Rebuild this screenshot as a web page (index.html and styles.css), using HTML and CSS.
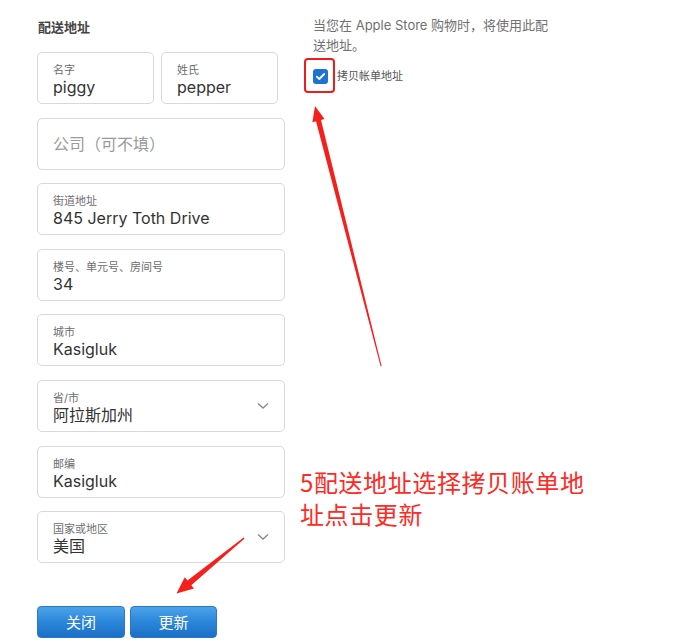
FILE: index.html
```html
<!DOCTYPE html>
<html lang="zh-CN">
<head>
<meta charset="utf-8">
<title>配送地址</title>
<link rel="stylesheet" href="styles.css">
</head>
<body>
<div class="page">
  <section class="form-col">
    <h2 class="title">配送地址</h2>
    <div class="fields">
      <div class="row-2">
        <div class="field"><span class="lbl">名字</span><span class="val">piggy</span></div>
        <div class="field"><span class="lbl">姓氏</span><span class="val">pepper</span></div>
      </div>
      <div class="field placeholder"><span class="ph">公司（可不填）</span></div>
      <div class="field"><span class="lbl">街道地址</span><span class="val">845 Jerry Toth Drive</span></div>
      <div class="field"><span class="lbl">楼号、单元号、房间号</span><span class="val">34</span></div>
      <div class="field"><span class="lbl">城市</span><span class="val">Kasigluk</span></div>
      <div class="field select"><span class="lbl">省/市</span><span class="val">阿拉斯加州</span>
        <svg class="chev" width="12" height="8" viewBox="0 0 12 8"><path d="M1 1.5 L6 6 L11 1.5" fill="none" stroke="#8a8a8a" stroke-width="1.4"/></svg>
      </div>
      <div class="field"><span class="lbl">邮编</span><span class="val">Kasigluk</span></div>
      <div class="field select"><span class="lbl">国家或地区</span><span class="val">美国</span>
        <svg class="chev" width="12" height="8" viewBox="0 0 12 8"><path d="M1 1.5 L6 6 L11 1.5" fill="none" stroke="#8a8a8a" stroke-width="1.4"/></svg>
      </div>
    </div>
    <div class="buttons">
      <button class="btn btn-close">关闭</button>
      <button class="btn btn-update">更新</button>
    </div>
  </section>
  <section class="info-col">
    <p class="info">当您在 Apple Store 购物时，将使用此配送地址。</p>
    <label class="copy">
      <span class="cb"><svg width="15" height="15" viewBox="0 0 15 15"><path d="M3.8 7.6 L6.3 10 L11.2 5" fill="none" stroke="#fff" stroke-width="1.8" stroke-linecap="round" stroke-linejoin="round"/></svg></span>
      <span class="copy-text">拷贝帐单地址</span>
    </label>
  </section>
</div>

<div class="mark-box"></div>
<p class="note">5配送地址选择拷贝账单地<br>址点击更新</p>
<svg class="arrows" width="692" height="641" viewBox="0 0 692 641">
  <polygon fill="#f5201b" points="315,106 324.5,119 321,120 381.6,366 380.6,366.2 316,121.3 312.4,122.3"/>
  <polygon fill="#f5201b" points="176.5,593.5 194,588.5 191.3,585.2 244.6,538.6 243.6,537.4 187.5,580.6 184.8,577.2"/>
</svg>
</body>
</html>
```
FILE: styles.css
```css
* { box-sizing: border-box; }
html, body { margin: 0; padding: 0; background: #fff; }
body {
  width: 692px;
  height: 641px;
  overflow: hidden;
  position: relative;
  font-family: Inter, "Noto Sans CJK SC", sans-serif;
  color: #333;
}
.page {
  display: flex;
  align-items: flex-start;
}
.form-col {
  margin-left: 37px;
  width: 248px;
  padding-top: 18px;
}
.title {
  margin: 0 0 0 1px;
  font-size: 13px;
  line-height: 18px;
  font-weight: 700;
  color: #444;
  height: 18px;
}
.fields {
  margin-top: 16px;
  display: flex;
  flex-direction: column;
  gap: 13.6px;
}
.row-2 {
  display: flex;
  gap: 7px;
  width: 241px;
}
.row-2 .field { flex: 1; }
.field {
  position: relative;
  height: 52px;
  border: 1px solid #d9d9d9;
  border-radius: 5px;
  padding: 10px 15px 0;
  display: flex;
  flex-direction: column;
}
.lbl {
  font-size: 11px;
  line-height: 14px;
  color: #6e6e6e;
}
.val {
  font-size: 16px;
  line-height: 20px;
  color: #333;
}
.placeholder {
  padding-top: 0;
  justify-content: center;
}
.ph {
  font-size: 16px;
  line-height: 20px;
  color: #9a9a9a;
}
.chev {
  position: absolute;
  right: 15px;
  top: 21px;
}
.buttons {
  margin-top: 43px;
  display: flex;
  gap: 5px;
}
.btn {
  height: 32px;
  border: 1px solid #2a78c8;
  border-radius: 4px;
  background: linear-gradient(#4da3ea, #2b86d9 50%, #1b6fc6);
  color: #fff;
  font-family: "Noto Sans CJK SC", sans-serif;
  font-size: 15px;
  line-height: 30px;
  padding: 0;
}
.btn-close { width: 88px; }
.btn-update { width: 87px; }
.info-col {
  margin-left: 28px;
  width: 246px;
  padding-top: 15px;
}
.info {
  margin: 0;
  font-size: 13px;
  line-height: 20px;
  color: #707070;
}
.copy {
  margin-top: 14px;
  display: flex;
  align-items: center;
  gap: 9px;
}
.cb {
  width: 15px;
  height: 15px;
  border-radius: 3px;
  background: #1d72d3;
  display: block;
}
.cb svg { display: block; }
.copy-text {
  font-size: 11px;
  line-height: 15px;
  color: #555;
}
.mark-box {
  position: absolute;
  left: 304px;
  top: 58px;
  width: 31px;
  height: 35px;
  border: 2px solid #ee1c1c;
  border-radius: 4px;
}
.note {
  position: absolute;
  left: 300px;
  top: 466px;
  margin: 0;
  font-family: "Noto Sans CJK SC", sans-serif;
  font-size: 24px;
  line-height: 32px;
  letter-spacing: 0.6px;
  color: #ff2a24;
  white-space: nowrap;
}
.arrows {
  position: absolute;
  left: 0;
  top: 0;
  pointer-events: none;
}
```
